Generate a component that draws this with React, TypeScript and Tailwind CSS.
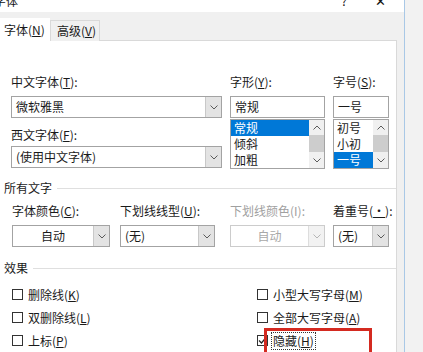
const font = "font-['Noto_Sans_CJK_SC','Noto_Sans',sans-serif]";

function Chevron({ color = '#5a5a5a' }: { color?: string }) {
  return (
    <svg width="8" height="5" viewBox="0 0 8 5">
      <path d="M0.5 0.5 L4 4 L7.5 0.5" fill="none" stroke={color} strokeWidth="1" />
    </svg>
  )
}

function ChevronUp({ color = '#5a5a5a' }: { color?: string }) {
  return (
    <svg width="8" height="5" viewBox="0 0 8 5">
      <path d="M0.5 4.5 L4 1 L7.5 4.5" fill="none" stroke={color} strokeWidth="1" />
    </svg>
  )
}

function Combo({ text, center, disabled }: { text: string; center?: boolean; disabled?: boolean }) {
  return (
    <div className={`h-[22px] flex border ${disabled ? 'border-[#cccccc]' : 'border-[#a3a3a3]'} bg-white`}>
      <div className={`flex-1 flex items-center px-[4px] ${center ? 'justify-center' : ''} ${disabled ? 'text-[#a8a8a8]' : 'text-[#1a1a1a]'}`}>
        {text}
      </div>
      <div className={`w-[16px] flex items-center justify-center border-l ${disabled ? 'border-[#dddddd] bg-[#f2f2f2]' : 'border-[#c8c8c8] bg-[#e3e3e3]'}`}>
        <Chevron color={disabled ? '#b5b5b5' : '#5a5a5a'} />
      </div>
    </div>
  )
}

function TextBox({ text }: { text: string }) {
  return (
    <div className="h-[22px] flex items-center px-[4px] border border-[#a3a3a3] bg-white text-[#1a1a1a]">{text}</div>
  )
}

function ListBox({ items, selected }: { items: string[]; selected: number }) {
  return (
    <div className="h-[50px] flex border border-[#a3a3a3] bg-white">
      <div className="flex-1 flex flex-col">
        {items.map((it, i) => (
          <div
            key={it}
            className={`h-[16px] flex items-center px-[3px] ${i === selected ? 'bg-[#0078d7] text-white' : 'text-[#1a1a1a]'}`}
          >
            {it}
          </div>
        ))}
      </div>
      <div className="w-[15px] flex flex-col bg-[#f0f0f0]">
        <div className="h-[15px] flex items-center justify-center"><ChevronUp /></div>
        <div className="h-[17px] bg-[#cdcdcd]" />
        <div className="flex-1 flex items-center justify-center"><Chevron /></div>
      </div>
    </div>
  )
}

function Label({ children, muted }: { children: React.ReactNode; muted?: boolean }) {
  return <div className={`h-[16px] flex items-center whitespace-nowrap ${muted ? 'text-[#a0a0a0]' : 'text-[#1a1a1a]'}`}>{children}</div>
}

function Section({ title, className }: { title: string; className?: string }) {
  return (
    <div className={`h-[16px] flex items-center pl-[4px] ${className ?? ''}`}>
      <span className="text-[#1a1a1a]">{title}</span>
      <div className="flex-1 h-px bg-[#dfdfdf] ml-[5px]" />
    </div>
  )
}

function Check({ label, checked, focus }: { label: React.ReactNode; checked?: boolean; focus?: boolean }) {
  return (
    <div className="h-[23px] flex items-center">
      <div className="w-[11px] h-[11px] border border-[#333333] bg-white flex items-center justify-center">
        {checked && (
          <svg width="9" height="9" viewBox="0 0 9 9">
            <path d="M1 4.5 L3.5 7 L8 1.5" fill="none" stroke="#222" strokeWidth="1.2" />
          </svg>
        )}
      </div>
      <span className={`ml-[4px] text-[#1a1a1a] px-[1px] ${focus ? 'outline outline-1 outline-dotted outline-[#333]' : ''}`}>{label}</span>
    </div>
  )
}

export default function App() {
  return (
    <div className={`w-[423px] h-[352px] overflow-hidden flex bg-[#f2f2f2] text-[12px] leading-[16px] relative ${font}`}>
      <div className="w-[405px] flex flex-col bg-[#f0f0f0] border-r border-[#a9c8e6]">
        {/* title bar */}
        <div className="h-[13px] bg-white overflow-hidden flex items-end">
          <div className="flex w-full mb-[3px] text-[#111]">
            <span className="-ml-[6px] text-[12px]">字体</span>
            <span className="ml-auto mr-[28px] text-[12px]">?</span>
            <span className="mr-[18px] text-[13px]">✕</span>
          </div>
        </div>

        {/* tabs */}
        <div className="h-[32px] flex items-end">
          <div className="w-[50px] h-[23px] bg-white flex items-center pl-[4px] text-[#1a1a1a]">
            字体(<u>N</u>)
          </div>
          <div className="w-[50px] h-[21px] border border-b-0 border-[#d9d9d9] bg-[#f0f0f0] flex items-center pl-[6px] text-[#1a1a1a]">
            高级(<u>V</u>)
          </div>
          <div className="flex-1 border-b border-[#d9d9d9] mr-[7px]" />
        </div>

        {/* panel */}
        <div className="flex-1 mr-[7px] bg-white border-r border-[#d9d9d9] flex flex-col">
          <div className="flex pl-[11px] pt-[33px]">
            <div className="w-[211px] flex flex-col">
              <Label>中文字体(<u>T</u>):</Label>
              <div className="mt-[6px]"><Combo text="微软雅黑" /></div>
              <div className="mt-[9px]"><Label>西文字体(<u>F</u>):</Label></div>
              <div className="mt-[3px]"><Combo text="(使用中文字体)" /></div>
            </div>
            <div className="w-[95px] ml-[8px] flex flex-col">
              <Label>字形(<u>Y</u>):</Label>
              <div className="mt-[6px]"><TextBox text="常规" /></div>
              <div className="mt-[1px]"><ListBox items={['常规', '倾斜', '加粗']} selected={0} /></div>
            </div>
            <div className="w-[56px] ml-[8px] flex flex-col">
              <Label>字号(<u>S</u>):</Label>
              <div className="mt-[6px]"><TextBox text="一号" /></div>
              <div className="mt-[1px]"><ListBox items={['初号', '小初', '一号']} selected={2} /></div>
            </div>
          </div>

          <Section title="所有文字" className="mt-[11px]" />

          <div className="flex pl-[12px] mt-[7px]">
            <div className="w-[98px] flex flex-col">
              <Label>字体颜色(<u>C</u>):</Label>
              <div className="mt-[6px]"><Combo text="自动" center /></div>
            </div>
            <div className="w-[95px] ml-[10px] flex flex-col">
              <Label>下划线线型(<u>U</u>):</Label>
              <div className="mt-[6px]"><Combo text="(无)" /></div>
            </div>
            <div className="w-[95px] ml-[15px] flex flex-col">
              <Label muted>下划线颜色(I):</Label>
              <div className="mt-[6px]"><Combo text="自动" center disabled /></div>
            </div>
            <div className="w-[56px] ml-[8px] flex flex-col">
              <Label>着重号(<u>·</u>):</Label>
              <div className="mt-[6px]"><Combo text="(无)" /></div>
            </div>
          </div>

          <Section title="效果" className="mt-[13px]" />

          <div className="flex mt-[7px]">
            <div className="w-[257px] pl-[12px] flex flex-col">
              <Check label={<>删除线(<u>K</u>)</>} />
              <Check label={<>双删除线(<u>L</u>)</>} />
              <Check label={<>上标(<u>P</u>)</>} />
            </div>
            <div className="flex flex-col">
              <Check label={<>小型大写字母(<u>M</u>)</>} />
              <Check label={<>全部大写字母(<u>A</u>)</>} />
              <Check label={<>隐藏(<u>H</u>)</>} checked focus />
            </div>
          </div>
        </div>
      </div>

      {/* annotation box */}
      <div className="absolute left-[264px] top-[328px] w-[108px] h-[40px] border-[3px] border-[#d42a20]" />
    </div>
  )
}
